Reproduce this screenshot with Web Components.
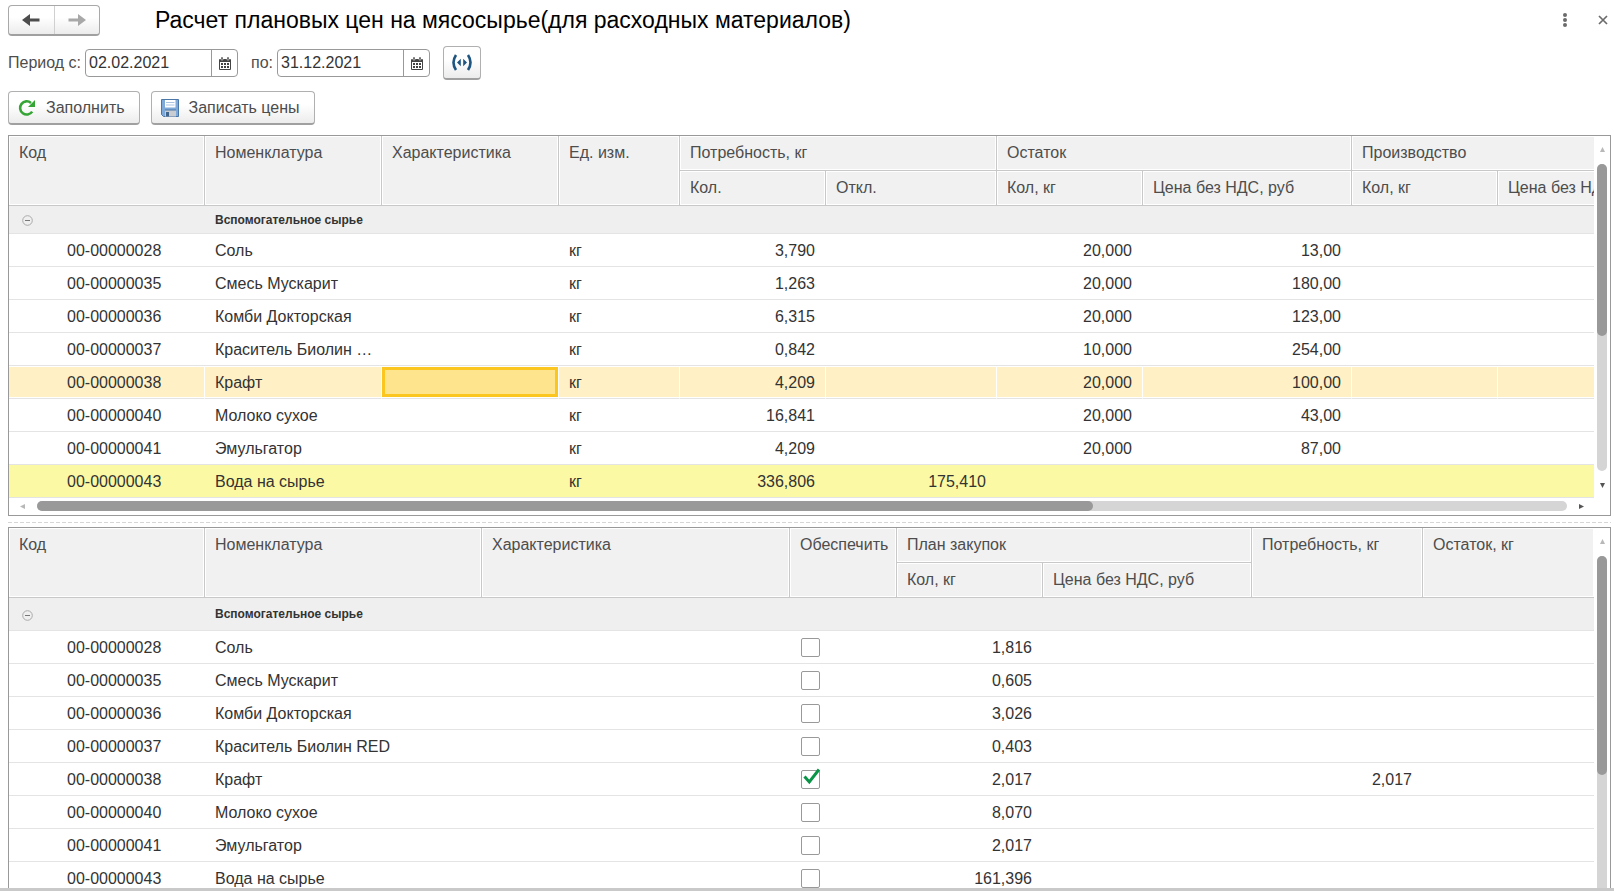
<!DOCTYPE html>
<html lang="ru">
<head>
<meta charset="utf-8">
<title>Расчет плановых цен на мясосырье(для расходных материалов)</title>
<style>
html, body { margin: 0; height: 100%; }
body { background: #fff; color: #333; font: 16px/20px "Liberation Sans", Arial, sans-serif; overflow: hidden; }
</style>
</head>
<body>
<price-form></price-form>

<template id="t-price-form">
<style>
:host { display: flex; flex-direction: column; height: 100vh; box-sizing: border-box; border-bottom: 3px solid #c9c9c9; }
header { display: flex; align-items: center; height: 30px; padding: 5px 1px 0 8px; }
h1 { flex: 1; margin: 0 0 0 54px; font-size: 23px; line-height: 30px; font-weight: normal; color: #000; white-space: nowrap; }
.period { display: flex; align-items: center; height: 34px; padding: 11px 8px 0; }
.period date-field + date-field { margin-left: 13px; }
.period tool-button { margin-left: 13px; }
.commands { display: flex; gap: 11px; padding: 11px 8px 10px; }
main { display: flex; flex-direction: column; flex: 1; min-height: 0; padding: 0 3px 0 8px; }
.split { flex: none; height: 1px; margin: 6px 0 4px; background: repeating-linear-gradient(90deg, #d6d6d6 0 4px, transparent 4px 6px); }
.fill { flex: 1; min-height: 0; }
.icon { display: flex; width: 20px; height: 24px; padding: 0; border: 0; background: none; align-items: center; justify-content: center; }
.icon + .icon { margin-left: 18px; }
svg { display: block; }
</style>
<header>
  <history-nav></history-nav>
  <h1>Расчет плановых цен на мясосырье(для расходных материалов)</h1>
  <button class="icon" aria-label="Ещё"><svg width="6" height="14" fill="#6b6b6b"><circle cx="3" cy="2" r="2"/><circle cx="3" cy="7" r="2"/><circle cx="3" cy="12" r="2"/></svg></button>
  <button class="icon" aria-label="Закрыть"><svg width="10" height="10" stroke="#6b6b6b" stroke-width="1.7"><path d="M1 1l8 8M9 1l-8 8"/></svg></button>
</header>
<div class="period">
  <date-field label="Период с:" value="02.02.2021"></date-field>
  <date-field label="по:" value="31.12.2021"></date-field>
  <tool-button compact label="Выбрать период">
    <svg slot="icon" width="20" height="17" fill="none" stroke="#1d5480" stroke-width="2.6"><path d="M4 1Q-1 8.500 4 16M16 1q5 7.500 0 15"/><path d="M8.800 4.800v7.400L5 8.500zM11.200 4.800v7.400L15 8.500z" fill="#1d5480" stroke="none"/></svg>
  </tool-button>
</div>
<div class="commands">
  <tool-button><svg slot="icon" width="18" height="18"><path d="M14.200 12.600A6.600 6.600 0 1 1 13 3.900" fill="none" stroke="#35a635" stroke-width="2.600"/><path d="M17 1v7h-7z" fill="#35a635"/></svg>Заполнить</tool-button>
  <tool-button><svg slot="icon" width="18" height="18"><path d="M.5.5h17v17H2.500l-2-2z" fill="#7fa9d8" stroke="#4a76a8"/><path d="M4 1h10.500v7.500H4z" fill="#fff"/><path d="M5 3.500h8.500M5 6h8.500" stroke="#a8c4e2"/><path d="M4 11h11v6.500H4z" fill="#c9ccd0"/><path d="M5 13h3v4.500H5z" fill="#41648a"/><path d="M4 11h11" stroke="#4a76a8"/></svg>Записать цены</tool-button>
</div>
<main>
  <data-grid id="need"></data-grid>
  <div class="split" role="separator"></div>
  <data-grid id="plan" class="fill"></data-grid>
</main>
</template>

<template id="t-history-nav">
<style>
:host { display: flex; flex: none; width: 92px; height: 31px; margin-right: 1px; box-sizing: border-box; border: 1px solid #a9a9a9; border-bottom: 2px solid #a0a0a0; border-radius: 4px; background: linear-gradient(#fff 40%, #ececec); }
button { flex: 1; display: flex; align-items: center; justify-content: center; padding: 0; border: 0; background: none; }
button + button { border-left: 1px solid #d0d0d0; }
</style>
<button aria-label="Назад"><svg width="18" height="12"><path d="M0 6l8-6v4.500h9.500v3H8V12z" fill="#4d4d4d"/></svg></button>
<button aria-label="Вперед" disabled><svg width="18" height="12"><path d="M18 6l-8-6v4.500H.5v3H10V12z" fill="#a8a8a8"/></svg></button>
</template>

<template id="t-date-field">
<style>
:host { display: flex; align-items: center; color: #4d4d4d; }
.box { display: flex; width: 153px; height: 28px; margin-left: 4px; box-sizing: border-box; border: 1px solid #999; border-radius: 4px; background: #fff; }
input { flex: 1; min-width: 0; padding: 0 3px; border: 0; background: none; font: inherit; color: #333; outline: 0; }
button { display: flex; align-items: center; justify-content: center; width: 26px; padding: 0; border: 0; border-left: 1px solid #999; background: none; }
</style>
<label for="d"></label>
<div class="box"><input id="d" type="text"><button aria-label="Календарь"><svg width="12" height="13"><path d="M0 3q0-1 1-1h10q1 0 1 1v9q0 1-1 1H1q-1 0-1-1z" fill="#444"/><path d="M2 0h2v3H2zM8 0h2v3H8z" fill="#444" stroke="#fff" stroke-width=".5"/><path d="M1 5h10v7H1z" fill="#fff"/><path d="M2 6h2v2H2zM5 6h2v2H5zM8 6h2v2H8zM2 9h2v2H2zM5 9h2v2H5zM8 9h2v2H8z" fill="#444"/></svg></button></div>
</template>

<template id="t-tool-button">
<style>
:host { display: block; }
button { display: flex; align-items: center; gap: 10px; height: 34px; padding: 0 14px 0 9px; box-sizing: border-box; border: 1px solid #b0b0b0; border-bottom: 2px solid #a0a0a0; border-radius: 4px; background: linear-gradient(#fff 40%, #ececec); font: inherit; color: #4d4d4d; white-space: nowrap; }
:host([compact]) button { width: 38px; padding: 0; gap: 0; justify-content: center; }
</style>
<button><slot name="icon"></slot><slot></slot></button>
</template>

<template id="t-tick-box">
<style>
:host { display: block; position: relative; width: 19px; height: 19px; }
input { appearance: none; display: block; width: 19px; height: 19px; margin: 0; box-sizing: border-box; border: 1px solid #999; border-radius: 2px; background: #fff; }
svg { display: none; position: absolute; left: 2px; top: -2px; pointer-events: none; }
input:checked + svg { display: block; }
</style>
<input type="checkbox"><svg width="18" height="17" fill="none" stroke="#0a9447" stroke-width="3"><path d="M1.500 8.500l4.800 5.500L16 1.500"/></svg>
</template>

<template id="t-scroll-bar">
<style>
:host { display: flex; align-items: center; gap: 12px; }
:host([vertical]) { flex-direction: column; }
.track { flex: 1; display: flex; height: 10px; border-radius: 5px; background: #d5d5d5; }
.thumb { width: var(--thumb, 50%); border-radius: 5px; background: #999; }
:host([vertical]) .track { flex-direction: column; width: 10px; height: auto; }
:host([vertical]) .thumb { width: auto; height: var(--thumb, 50%); }
:host([open-end]) .track { border-radius: 5px 5px 0 0; }
:host([open-end]) .next { display: none; }
svg { display: block; width: 5px; height: 5px; fill: #555; }
.prev { fill: #b8b8b8; }
:host([vertical]) svg { transform: rotate(90deg); }
</style>
<svg class="prev" viewBox="0 0 5 5"><path d="M5 0v5L0 2.500z"/></svg>
<div class="track"><div class="thumb"></div></div>
<svg class="next" viewBox="0 0 5 5"><path d="M0 0v5l5-2.500z"/></svg>
</template>

<template id="t-data-grid">
<style>
:host { display: block; }
.frame { display: grid; grid-template-columns: minmax(0, 1fr) 16px; box-sizing: border-box; height: 100%; border: 1px solid #999; overflow: hidden; }
:host(.fill) .frame { border-bottom: 0; }
.view { overflow: hidden; min-height: 0; }
table { table-layout: fixed; border-collapse: separate; border-spacing: 0; width: 100%; }
th, td { box-sizing: border-box; padding: 0 4px 0 10px; overflow: hidden; white-space: nowrap; text-align: left; font-weight: normal; }
th { height: 35px; padding-top: 7px; vertical-align: top; color: #4d4d4d; background: #f1f1f1; border-right: 1px solid #c8c8c8; border-bottom: 1px solid #c8c8c8; box-shadow: inset 0 0 0 1px #fff; }
th.last { border-right: 0; }
td { height: 33px; padding-top: 2px; border-bottom: 1px solid #e4e4e4; color: #333; text-overflow: ellipsis; }
td.num { padding-right: 11px; text-align: right; }
td.code { padding-left: 58px; }
td.tick { padding-top: 0; padding-left: 11px; }
tr.group td { height: var(--group, 33px); background: #efefef; font-size: 12px; line-height: 16px; font-weight: bold; overflow: visible; }
tr.group td.name { padding-bottom: 2px; }
tr.group button { display: block; width: 11px; height: 11px; margin: 0 0 0 3px; padding: 0; border: 0; background: none; }
tr.group svg { display: block; }
tr.current td { background: #fff1c5; border-right: 1px solid #fff; box-shadow: inset 0 1px #fff, inset 0 -1px #fff; }
tr.current td.num { padding-right: 10px; }
tr.current td.active { padding: 1px 0; }
td.active div { height: 30px; box-sizing: border-box; border: 3px solid #fac61f; background: #ffe48e; }
tr.warn td { background: #fcf9a5; }
.v { padding: 11px 3px 27px; }
:host(.fill) .v { padding-bottom: 0; }
.h { height: 10px; padding: 3px 10px 4px 11px; }
</style>
<div class="frame"><div class="view"><table></table></div><scroll-bar class="v" vertical></scroll-bar></div>
</template>

<script>
class Base extends HTMLElement {
  constructor() {
    super();
    this.attachShadow({ mode: 'open' }).append(document.getElementById('t-' + this.localName).content.cloneNode(true));
  }
  $(s) { return this.shadowRoot.querySelector(s); }
}
class HistoryNav extends Base {}
class ScrollBar extends Base {}
class DateField extends Base {
  connectedCallback() {
    this.$('label').textContent = this.getAttribute('label');
    this.$('input').value = this.getAttribute('value');
  }
}
class ToolButton extends Base {
  connectedCallback() {
    if (this.hasAttribute('label')) this.$('button').setAttribute('aria-label', this.getAttribute('label'));
  }
}
class TickBox extends Base {
  connectedCallback() {
    this.$('input').checked = this.hasAttribute('checked');
    this.$('input').setAttribute('aria-label', this.getAttribute('label'));
  }
}
class DataGrid extends Base {
  set model(m) {
    const th = (h, last) => `<th${h.rows ? ' rowspan="2"' : ''}${h.cols ? ` colspan="${h.cols}"` : ''}${last ? ' class="last"' : ''}>${h.t}</th>`;
    const cell = (v, i, r) => {
      const kind = m.kinds[i];
      if (r.mark === 'current' && i === m.active) return '<td class="active"><div></div></td>';
      if (kind === 'tick') return `<td class="tick"><tick-box label="Обеспечить: ${r.c[1]}"${v ? ' checked' : ''}></tick-box></td>`;
      return `<td class="${kind}">${v}</td>`;
    };
    this.$('table').innerHTML =
      `<colgroup>${m.widths.map(w => `<col${w ? ` style="width:${w}px"` : ''}>`).join('')}</colgroup>
      <thead><tr>${m.head.map((h, i) => th(h, i === m.head.length - 1 && m.fit)).join('')}</tr><tr>${m.sub.map(t => th({ t })).join('')}</tr></thead>
      <tbody><tr class="group"><td><button aria-label="Свернуть"><svg width="11" height="11" fill="none" stroke="#aaa"><circle cx="5.500" cy="5.500" r="4.800"/><path d="M3 5.500h5" stroke="#777"/></svg></button></td><td class="name" colspan="${m.widths.length - 1}">Вспомогательное сырье</td></tr>
      ${m.rows.map(r => `<tr class="${r.mark || ''}">${m.kinds.map((k, i) => cell(r.c[i] ?? '', i, r)).join('')}</tr>`).join('')}</tbody>`;
    if (!m.fit) this.$('table').style.width = m.widths.reduce((a, b) => a + b) + 'px';
    if (m.group) this.style.setProperty('--group', m.group + 'px');
    const v = this.$('.v');
    v.style.setProperty('--thumb', m.vThumb);
    if (m.hThumb) {
      const h = document.createElement('scroll-bar');
      h.className = 'h';
      h.style.setProperty('--thumb', m.hThumb);
      this.$('.view').append(h);
    } else v.setAttribute('open-end', '');
  }
}
class PriceForm extends Base {
  connectedCallback() {
    this.$('#need').model = {
      widths: [196, 177, 177, 121, 146, 171, 146, 209, 146, 209], group: 28, active: 2, vThumb: '56%', hThumb: '69%',
      kinds: ['code', '', '', '', 'num', 'num', 'num', 'num', 'num', 'num'],
      head: [{ t: 'Код', rows: 1 }, { t: 'Номенклатура', rows: 1 }, { t: 'Характеристика', rows: 1 }, { t: 'Ед. изм.', rows: 1 }, { t: 'Потребность, кг', cols: 2 }, { t: 'Остаток', cols: 2 }, { t: 'Производство', cols: 2 }],
      sub: ['Кол.', 'Откл.', 'Кол, кг', 'Цена без НДС, руб', 'Кол, кг', 'Цена без НДС, руб'],
      rows: [
        { c: ['00-00000028', 'Соль', '', 'кг', '3,790', '', '20,000', '13,00'] },
        { c: ['00-00000035', 'Смесь Мускарит', '', 'кг', '1,263', '', '20,000', '180,00'] },
        { c: ['00-00000036', 'Комби Докторская', '', 'кг', '6,315', '', '20,000', '123,00'] },
        { c: ['00-00000037', 'Краситель Биолин …', '', 'кг', '0,842', '', '10,000', '254,00'] },
        { c: ['00-00000038', 'Крафт', '', 'кг', '4,209', '', '20,000', '100,00'], mark: 'current' },
        { c: ['00-00000040', 'Молоко сухое', '', 'кг', '16,841', '', '20,000', '43,00'] },
        { c: ['00-00000041', 'Эмульгатор', '', 'кг', '4,209', '', '20,000', '87,00'] },
        { c: ['00-00000043', 'Вода на сырье', '', 'кг', '336,806', '175,410'], mark: 'warn' }
      ]
    };
    this.$('#plan').model = {
      widths: [196, 277, 308, 107, 146, 209, 171, 0], fit: true, vThumb: '66%',
      kinds: ['code', '', '', 'tick', 'num', 'num', 'num', 'num'],
      head: [{ t: 'Код', rows: 1 }, { t: 'Номенклатура', rows: 1 }, { t: 'Характеристика', rows: 1 }, { t: 'Обеспечить', rows: 1 }, { t: 'План закупок', cols: 2 }, { t: 'Потребность, кг', rows: 1 }, { t: 'Остаток, кг', rows: 1 }],
      sub: ['Кол, кг', 'Цена без НДС, руб'],
      rows: [
        { c: ['00-00000028', 'Соль', '', 0, '1,816'] },
        { c: ['00-00000035', 'Смесь Мускарит', '', 0, '0,605'] },
        { c: ['00-00000036', 'Комби Докторская', '', 0, '3,026'] },
        { c: ['00-00000037', 'Краситель Биолин RED', '', 0, '0,403'] },
        { c: ['00-00000038', 'Крафт', '', 1, '2,017', '', '2,017'] },
        { c: ['00-00000040', 'Молоко сухое', '', 0, '8,070'] },
        { c: ['00-00000041', 'Эмульгатор', '', 0, '2,017'] },
        { c: ['00-00000043', 'Вода на сырье', '', 0, '161,396'] }
      ]
    };
  }
}
customElements.define('history-nav', HistoryNav);
customElements.define('scroll-bar', ScrollBar);
customElements.define('date-field', DateField);
customElements.define('tool-button', ToolButton);
customElements.define('tick-box', TickBox);
customElements.define('data-grid', DataGrid);
customElements.define('price-form', PriceForm);
</script>
</body>
</html>
